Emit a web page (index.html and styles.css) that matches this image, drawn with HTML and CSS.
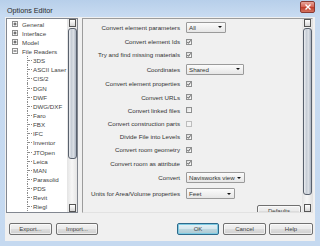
FILE: index.html
```html
<!DOCTYPE html>
<html lang="en">
<head>
    <meta charset="UTF-8">
    <meta name="viewport" content="width=device-width, initial-scale=1.0">
    <title>Options Editor</title>
    <link rel="stylesheet" href="styles.css">
</head>
<body>
    <div class="window">
        <div class="titlebar">
            <span class="title">Options Editor</span>
            <span class="close">
                <svg width="8" height="6" viewBox="0 0 8 6"><path d="M1.5 0.5 L6.5 5.5 M6.5 0.5 L1.5 5.5" stroke="#fff" stroke-width="1.4"/></svg>
            </span>
        </div>

        <div class="client">
            <div class="panes">
                <div class="tree">
                    <ul class="tree-list">
                        <li class="node"><svg class="exp" width="6" height="6" viewBox="0 0 6 6"><rect x="0.5" y="0.5" width="5" height="5" fill="#fafafa" stroke="#8e8f8f"/><path d="M1.5 3 H4.5 M3 1.5 V4.5" stroke="#444"/></svg>General</li>
                        <li class="node"><svg class="exp" width="6" height="6" viewBox="0 0 6 6"><rect x="0.5" y="0.5" width="5" height="5" fill="#fafafa" stroke="#8e8f8f"/><path d="M1.5 3 H4.5 M3 1.5 V4.5" stroke="#444"/></svg>Interface</li>
                        <li class="node"><svg class="exp" width="6" height="6" viewBox="0 0 6 6"><rect x="0.5" y="0.5" width="5" height="5" fill="#fafafa" stroke="#8e8f8f"/><path d="M1.5 3 H4.5 M3 1.5 V4.5" stroke="#444"/></svg>Model</li>
                        <li class="node"><svg class="exp" width="6" height="6" viewBox="0 0 6 6"><rect x="0.5" y="0.5" width="5" height="5" fill="#fafafa" stroke="#8e8f8f"/><path d="M1.5 3 H4.5" stroke="#444"/></svg>File Readers</li>
                        <li class="leaf"><span class="branch"></span>3DS</li>
                        <li class="leaf"><span class="branch"></span>ASCII Laser</li>
                        <li class="leaf"><span class="branch"></span>CIS/2</li>
                        <li class="leaf"><span class="branch"></span>DGN</li>
                        <li class="leaf"><span class="branch"></span>DWF</li>
                        <li class="leaf"><span class="branch"></span>DWG/DXF</li>
                        <li class="leaf"><span class="branch"></span>Faro</li>
                        <li class="leaf"><span class="branch"></span>FBX</li>
                        <li class="leaf"><span class="branch"></span>IFC</li>
                        <li class="leaf"><span class="branch"></span>Inventor</li>
                        <li class="leaf"><span class="branch"></span>JTOpen</li>
                        <li class="leaf"><span class="branch"></span>Leica</li>
                        <li class="leaf"><span class="branch"></span>MAN</li>
                        <li class="leaf"><span class="branch"></span>Parasolid</li>
                        <li class="leaf"><span class="branch"></span>PDS</li>
                        <li class="leaf"><span class="branch"></span>Revit</li>
                        <li class="leaf"><span class="branch"></span>Riegl</li>
                    </ul>
                    <div class="scrollbar">
                        <div class="sb-btn"></div>
                        <div class="sb-thumb tree-thumb"></div>
                        <div class="sb-track"></div>
                        <div class="sb-btn"></div>
                    </div>
                </div>

                <div class="props">
                    <div class="props-body">
                        <div class="row sel"><label>Convert element parameters</label><div class="select w-all">All</div></div>
                        <div class="row"><label>Convert element Ids</label><span class="check on"></span></div>
                        <div class="row"><label>Try and find missing materials</label><span class="check on"></span></div>
                        <div class="row sel"><label>Coordinates</label><div class="select w-shared">Shared</div></div>
                        <div class="row"><label>Convert element properties</label><span class="check on"></span></div>
                        <div class="row"><label>Convert URLs</label><span class="check on"></span></div>
                        <div class="row"><label>Convert linked files</label><span class="check"></span></div>
                        <div class="row"><label>Convert construction parts</label><span class="check off"></span></div>
                        <div class="row"><label>Divide File into Levels</label><span class="check on"></span></div>
                        <div class="row"><label>Convert room geometry</label><span class="check on"></span></div>
                        <div class="row"><label>Convert room as attribute</label><span class="check on"></span></div>
                        <div class="row sel"><label>Convert</label><div class="select w-view">Navisworks view</div></div>
                        <div class="row sel"><label>Units for Area/Volume properties</label><div class="select w-feet">Feet</div></div>
                        <div class="defaults-row"><button class="btn btn-defaults">Defaults</button></div>
                    </div>
                    <div class="scrollbar">
                        <div class="sb-btn"></div>
                        <div class="sb-thumb props-thumb"></div>
                        <div class="sb-track"></div>
                        <div class="sb-btn"></div>
                    </div>
                </div>
            </div>

            <div class="buttons">
                <button class="btn w43">Export...</button>
                <button class="btn w42">Import...</button>
                <span class="spacer"></span>
                <button class="btn btn-ok w42">OK</button>
                <button class="btn w43">Cancel</button>
                <button class="btn w44 help">Help</button>
            </div>
        </div>
    </div>
</body>
</html>
```

FILE: styles.css
```css
* {
    box-sizing: border-box;
}
body {
    margin: 0;
    background: #c6daf1;
    font-family: "Liberation Sans", Arial, sans-serif;
    font-size: 6.2px;
    color: #3a3a3a;
}
.window {
    width: 320px;
    height: 246px;
    display: flex;
    flex-direction: column;
    overflow: hidden;
    background: linear-gradient(#b7cfea, #c8dbf1 16px, #c5d9f0);
}
.titlebar {
    height: 17px;
    display: flex;
    align-items: flex-start;
    padding-left: 7px;
}
.title {
    font-size: 7.2px;
    color: #2a2a2a;
    margin-top: 6px;
}
.close {
    margin-left: auto;
    margin-right: 5px;
    margin-top: 1px;
    width: 15px;
    height: 12px;
    display: flex;
    align-items: center;
    justify-content: center;
    border: 1px solid #8a3a33;
    border-radius: 2px;
    background: linear-gradient(#e7a69c, #d7685a 45%, #c2402f 55%, #d3735f);
}
.client {
    flex: 1;
    margin: 0 5px 5px;
    padding: 1px 2px 0 1px;
    background: #f0f0f0;
    display: flex;
    flex-direction: column;
}
.panes {
    display: flex;
    gap: 4px;
    height: 195px;
}

/* tree on the left */
.tree {
    width: 72px;
    background: #fff;
    border: 1px solid #828790;
    display: flex;
}
.tree-list {
    flex: 1;
    list-style: none;
    margin: 0;
    padding: 0.5px 0 0;
    overflow: hidden;
}
.node, .leaf {
    height: 9.15px;
    display: flex;
    align-items: center;
    white-space: nowrap;
    color: #444;
}
.node {
    padding-left: 5px;
}
.exp {
    margin-right: 4px;
    flex: none;
}
.leaf {
    padding-left: 20px;
}
.branch {
    width: 5px;
    height: 100%;
    margin-right: 1px;
    border-left: 1px dotted #8c8c8c;
    display: flex;
    align-items: center;
}
.branch::after {
    content: "";
    width: 4px;
    border-top: 1px dotted #8c8c8c;
}

/* scrollbars */
.scrollbar {
    width: 10px;
    flex: none;
    display: flex;
    flex-direction: column;
    align-items: center;
    background: linear-gradient(90deg, #e4e4e4, #f7f7f7 50%, #e4e4e4);
}
.sb-btn {
    height: 8px;
    width: 10px;
    display: flex;
    align-items: center;
    justify-content: center;
}
.sb-btn::before {
    content: "";
    width: 5px;
    height: 6px;
    border: 1px solid #555;
    background: linear-gradient(#fff, #d6d6d6);
}
.sb-thumb {
    width: 9px;
    margin-top: 1px;
    border: 1px solid #59616d;
    border-radius: 3px;
    background: linear-gradient(90deg, #eceef1, #c3cad3 40%, #dfe3e8 60%, #a9b2bf);
}
.tree-thumb {
    height: 131px;
}
.props-thumb {
    height: 167px;
}
.sb-track {
    flex: 1;
}

/* property grid on the right */
.props {
    flex: 1;
    display: flex;
    border: 1px solid;
    border-color: #9c9c9c #e2e2e2 #e2e2e2 #9c9c9c;
    background: #f0f0f0;
}
.props-body {
    flex: 1;
    display: flex;
    flex-direction: column;
    overflow: hidden;
}
.row {
    height: 13.2px;
    display: flex;
    align-items: center;
    flex: none;
}
.row.sel {
    height: 16px;
}
.row label {
    width: 97px;
    margin-right: 6px;
    text-align: right;
    white-space: nowrap;
    color: #333;
}
.select {
    height: 11px;
    display: flex;
    align-items: center;
    padding-left: 2px;
    border: 1px solid #9a9a9a;
    border-radius: 1px;
    background: linear-gradient(#fbfbfb, #e6e6e6);
    color: #333;
    white-space: nowrap;
}
.select::after {
    content: "";
    margin-left: auto;
    margin-right: 3px;
    border-left: 2px solid transparent;
    border-right: 2px solid transparent;
    border-top: 2px solid #111;
}
.w-all { width: 40px; }
.w-shared { width: 58px; }
.w-view { width: 59px; }
.w-feet { width: 49px; }
.check {
    width: 6px;
    height: 6px;
    border: 1px solid #8e8f8f;
    background: linear-gradient(135deg, #dcdcdc, #fdfdfd);
}
.check.on {
    background: url("data:image/svg+xml,%3Csvg xmlns='http://www.w3.org/2000/svg' width='4' height='4' viewBox='0 0 4 4'%3E%3Cpath d='M0.4 2 L1.5 3.3 L3.6 0.4' fill='none' stroke='%23333' stroke-width='0.8'/%3E%3C/svg%3E") center / 4px 4px no-repeat, linear-gradient(135deg, #dcdcdc, #fdfdfd);
}
.check.off {
    border-color: #bdbdbd;
    background: #f4f4f4;
}
.defaults-row {
    display: flex;
    justify-content: flex-end;
    padding-right: 1px;
    margin-top: 3px;
    flex: none;
}

/* buttons */
.btn {
    height: 12px;
    padding: 0;
    font-family: inherit;
    font-size: 6px;
    color: #444;
    border: 1px solid #707070;
    border-radius: 2px;
    background: linear-gradient(#f2f2f2, #ebebeb 45%, #dcdcdc 55%, #cfcfcf);
    box-shadow: inset 0 0 0 1px rgba(255, 255, 255, 0.6);
}
.btn-defaults {
    width: 44px;
}
.btn-ok {
    border-color: #2d6a8c;
    background: linear-gradient(#e6f1f5, #d6e8ef 45%, #bcd6de 55%, #a9c8d2);
    box-shadow: inset 0 0 0 1px #7fcbe3;
}
.buttons {
    display: flex;
    gap: 4px;
    margin-top: 10px;
    padding-left: 3px;
}
.spacer {
    flex: 1;
}
.w42 { width: 42px; }
.w43 { width: 43px; }
.w44 { width: 44px; }
.help {
    margin-left: -1px;
}
```
